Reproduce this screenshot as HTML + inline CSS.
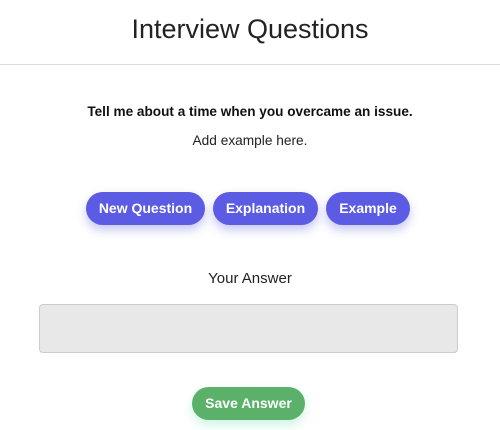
<!DOCTYPE html><html><head><style>
body{margin:0;width:500px;height:430px;background:#fff;font-family:"Liberation Sans",sans-serif;position:relative;overflow:hidden;color:#111}
.a{position:absolute;left:0;width:500px;text-align:center}
.h{top:14px;font-size:27px;font-weight:300;color:#222}
.line{position:absolute;top:64px;left:0;width:500px;height:1px;background:#ddd}
.b{position:absolute;top:192px;height:33px;border-radius:17px;background:#5b5be3;color:#fff;font-weight:bold;font-size:14px;line-height:33px;text-align:center;box-shadow:0 5px 10px rgba(91,91,227,.35)}
</style></head><body>
<div class="a h">Interview Questions</div>
<div class="line"></div>
<div class="a" style="top:104px;font-size:13.6px;font-weight:bold">Tell me about a time when you overcame an issue.</div>
<div class="a" style="top:133px;font-size:13.7px;color:#222">Add example here.</div>
<div class="b" style="left:86px;width:119px">New Question</div>
<div class="b" style="left:213px;width:105px">Explanation</div>
<div class="b" style="left:326px;width:84px">Example</div>
<div class="a" style="top:270px;font-size:15px;color:#222">Your Answer</div>
<div style="position:absolute;left:39px;top:304px;width:417px;height:47px;background:#e8e8e8;border:1px solid #ccc;border-radius:4px"></div>
<div class="b" style="left:192px;top:387px;width:113px;background:#5cb16a;box-shadow:0 5px 10px rgba(92,220,160,.3)">Save Answer</div>
</body></html>
